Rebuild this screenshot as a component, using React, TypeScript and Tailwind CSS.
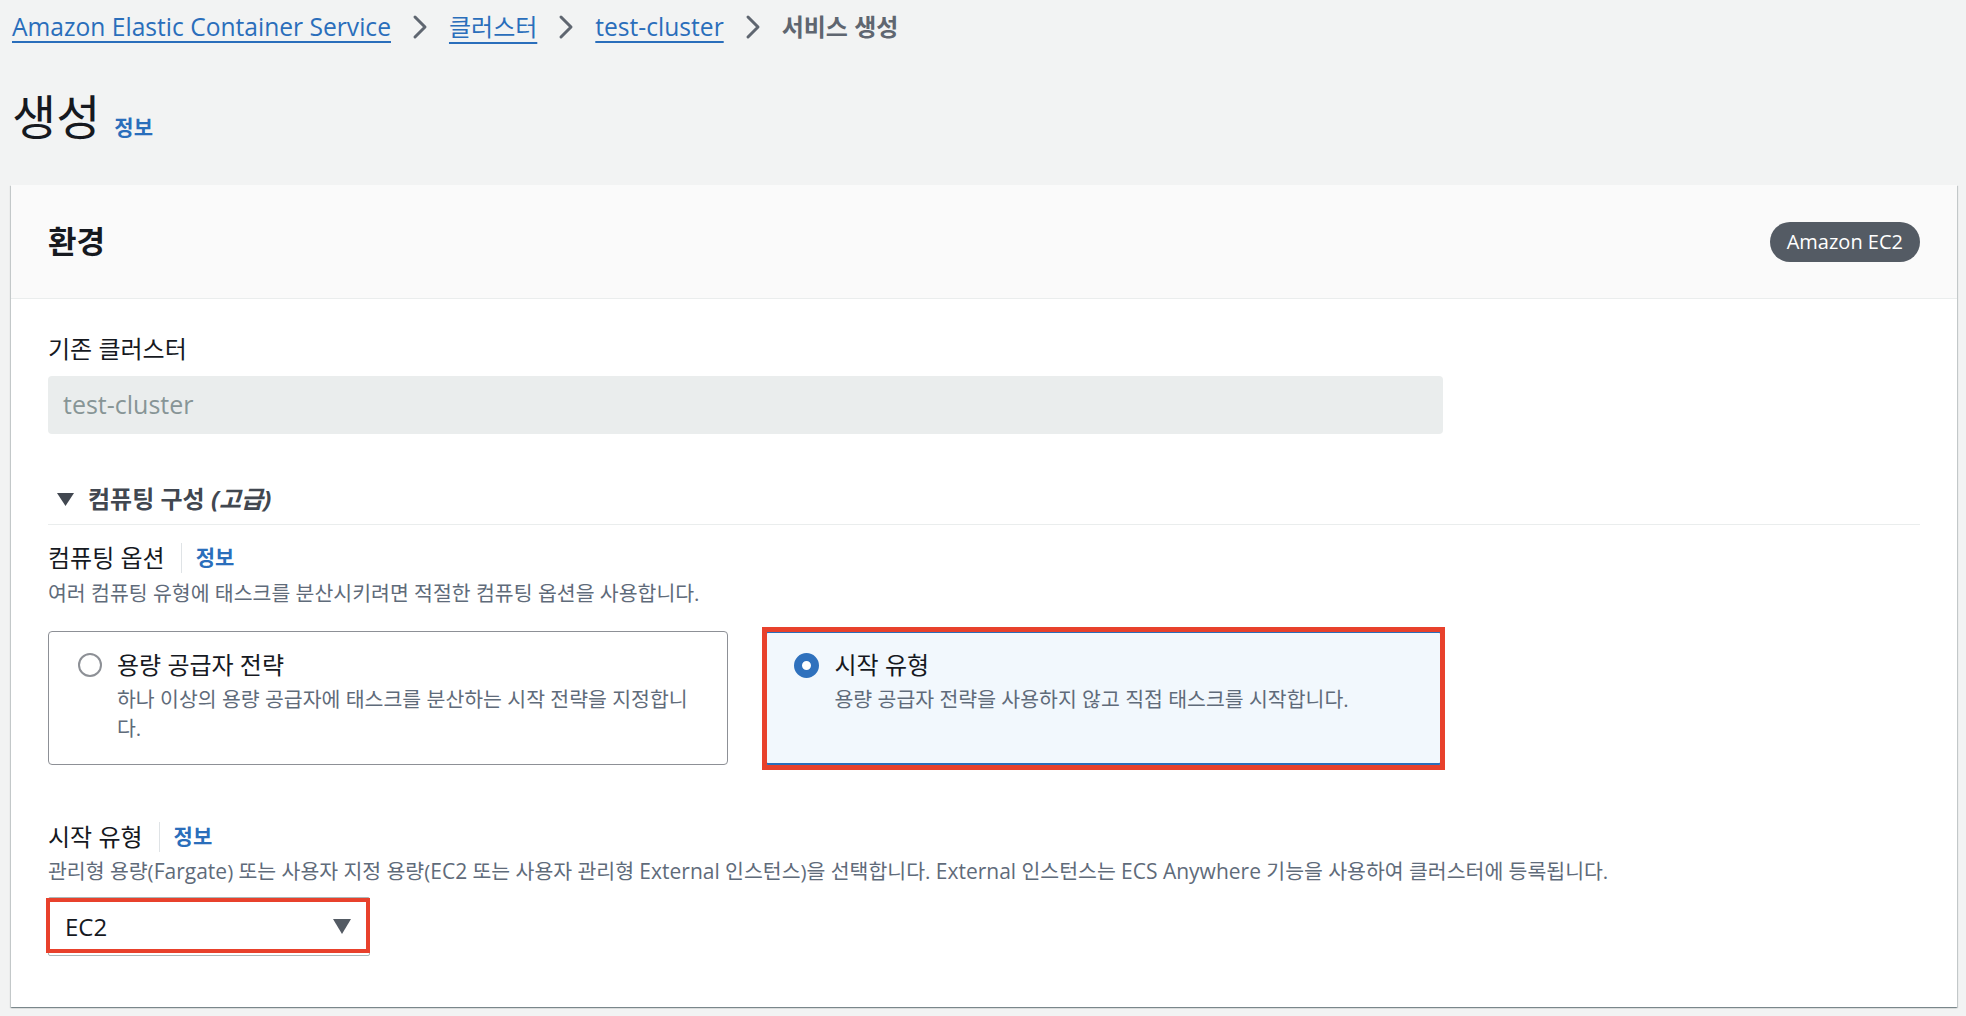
import { ReactNode } from 'react';

const LINK = 'text-[#2a6ebb]';

function Chevron() {
    return (
        <svg width="16" height="26" viewBox="0 0 16 26" className="shrink-0">
            <path d="M3 3 L13 13 L3 23" fill="none" stroke="#5f6670" strokeWidth="3" strokeLinecap="round" strokeLinejoin="round" />
        </svg>
    );
}

function Caret({ w, h, color }: { w: number; h: number; color: string }) {
    return (
        <svg width={w} height={h} viewBox={`0 0 ${w} ${h}`} className="shrink-0">
            <path d={`M0 0 L${w} 0 L${w / 2} ${h} Z`} fill={color} />
        </svg>
    );
}

function FieldLabel({ children }: { children: ReactNode }) {
    return (
        <div className="flex items-center h-[30px]">
            <span className="text-[24px] leading-[30px] text-[#16191f]">{children}</span>
            <span className="ml-[16px] w-px h-[30px] bg-[#dfe3e6]" />
            <span className={`ml-[14px] text-[21px] font-bold ${LINK}`}>정보</span>
        </div>
    );
}

function Latin({ children }: { children: ReactNode }) {
    return <span className="text-[21px]">{children}</span>;
}

export default function App() {
    return (
        <div className="min-h-[1016px] bg-[#f2f3f3] pt-[12px] font-['Open_Sans','Noto_Sans_CJK_KR',sans-serif] text-[#16191f]">
            {/* Breadcrumb */}
            <div className="pl-[12px] h-[30px] flex items-center gap-[21px] leading-[30px]">
                <span className={`text-[24.6px] underline decoration-2 underline-offset-[5px] ${LINK}`}>Amazon Elastic Container Service</span>
                <Chevron />
                <span className={`text-[24px] underline decoration-2 underline-offset-[6px] ${LINK}`}>클러스터</span>
                <Chevron />
                <span className={`text-[24.6px] underline decoration-2 underline-offset-[5px] ${LINK}`}>test-cluster</span>
                <Chevron />
                <span className="text-[24px] font-bold text-[#5f6670]">서비스 생성</span>
            </div>

            {/* Title */}
            <div className="pl-[12px] mt-[47px] flex items-baseline h-[56px]">
                <h1 className="text-[48px] leading-[56px] font-normal text-[#16191f]">생성</h1>
                <span className={`ml-[14px] text-[21px] font-bold ${LINK}`}>정보</span>
            </div>

            {/* Card */}
            <div className="ml-[11px] mr-[9px] mt-[40px] bg-white shadow-[0_1px_1px_0_rgba(0,28,36,0.3),1px_1px_1px_0_rgba(0,28,36,0.15),-1px_1px_1px_0_rgba(0,28,36,0.15)]">
                <div className="h-[114px] px-[37px] flex items-center justify-between bg-[#fafafa] border-b border-[#eaeded]">
                    <h2 className="text-[31px] font-bold leading-none text-[#16191f]">환경</h2>
                    <span className="h-[40px] px-[17px] rounded-full bg-[#545b64] text-white text-[20px] flex items-center">Amazon EC2</span>
                </div>

                <div className="px-[37px] pt-[35px] pb-[51px]">
                    <div className="text-[24px] leading-[30px]">기존 클러스터</div>
                    <div className="mt-[12px] h-[58px] w-[1395px] rounded-[4px] bg-[#eaeded] px-[15px] flex items-center text-[25px] text-[#879596]">
                        test-cluster
                    </div>

                    {/* Expandable section */}
                    <div className="mt-[50px] pb-[10px] border-b border-[#eaeded] flex items-center h-[41px]">
                        <span className="ml-[9px]">
                            <Caret w={17} h={13} color="#414750" />
                        </span>
                        <span className="ml-[14px] text-[24px] leading-[30px] font-bold text-[#414750]">
                            컴퓨팅 구성 <i>(고급)</i>
                        </span>
                    </div>

                    <div className="mt-[18px]">
                        <FieldLabel>컴퓨팅 옵션</FieldLabel>
                    </div>
                    <div className="mt-[5px] text-[20.5px] leading-[30px] text-[#5f6b7a]">
                        여러 컴퓨팅 유형에 태스크를 분산시키려면 적절한 컴퓨팅 옵션을 사용합니다.
                    </div>

                    {/* Radio cards */}
                    <div className="mt-[23px] w-[1395px] grid grid-cols-2 gap-[36px]">
                        <div className="h-[134px] rounded-[4px] border border-[#8d9096] bg-white pl-[29px] pt-[18px] flex gap-[15px]">
                            <div className="h-[30px] flex items-center">
                                <span className="w-[24px] h-[24px] rounded-full border-2 border-[#8d9096] bg-white" />
                            </div>
                            <div className="w-[575px]">
                                <div className="text-[24px] leading-[30px]">용량 공급자 전략</div>
                                <div className="mt-[5px] text-[20.5px] leading-[29px] text-[#5f6b7a]">
                                    하나 이상의 용량 공급자에 태스크를 분산하는 시작 전략을 지정합니다.
                                </div>
                            </div>
                        </div>

                        <div className="relative h-[134px] rounded-[4px] border-2 border-[#2a6ebb] bg-[#f2f8fd] pl-[28px] pt-[17px] flex gap-[16px]">
                            <div className="h-[30px] flex items-center">
                                <span className="w-[25px] h-[25px] rounded-full border-[8px] border-[#2f71bd] bg-white" />
                            </div>
                            <div>
                                <div className="text-[24px] leading-[30px]">시작 유형</div>
                                <div className="mt-[5px] text-[20.5px] leading-[29px] text-[#5f6b7a]">
                                    용량 공급자 전략을 사용하지 않고 직접 태스크를 시작합니다.
                                </div>
                            </div>
                            <div className="absolute -left-[4px] -right-[4px] -top-[6px] -bottom-[7px] border-[5px] border-[#e8412c] pointer-events-none" />
                        </div>
                    </div>

                    <div className="mt-[57px]">
                        <FieldLabel>시작 유형</FieldLabel>
                    </div>
                    <div className="mt-[4px] text-[20.5px] leading-[30px] text-[#5f6b7a]">
                        관리형 용량(<Latin>Fargate</Latin>) 또는 사용자 지정 용량(<Latin>EC2</Latin> 또는 사용자 관리형 <Latin>External</Latin> 인스턴스)을 선택합니다. <Latin>External</Latin> 인스턴스는 <Latin>ECS Anywhere</Latin> 기능을 사용하여 클러스터에 등록됩니다.
                    </div>

                    {/* Select */}
                    <div className="relative mt-[11px] w-[322px] h-[59px] rounded-[2px] border border-[#aab7b8] bg-white pl-[16px] pr-[18px] flex items-center justify-between">
                        <span className="text-[24px] font-medium text-[#16191f]">EC2</span>
                        <Caret w={18} h={15} color="#545b64" />
                        <div className="absolute -left-[3px] -right-[1px] top-0 bottom-[2px] border-[4px] border-[#e8412c] pointer-events-none" />
                    </div>
                </div>
            </div>
        </div>
    );
}
